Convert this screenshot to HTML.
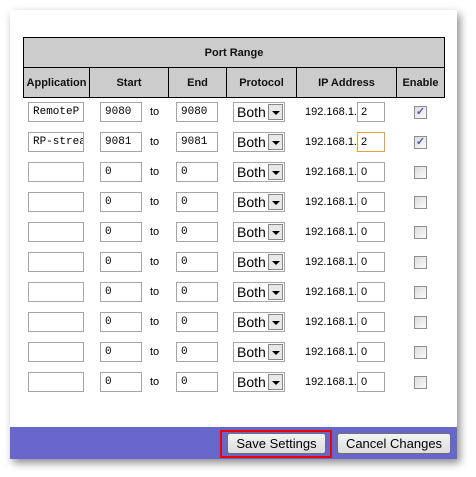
<!DOCTYPE html>
<html><head><style>
body{margin:0;width:476px;height:477px;background:#fff;position:relative;overflow:hidden;font-family:"Liberation Sans",Arial,sans-serif;}
.panel{position:absolute;left:10px;top:10px;width:447px;height:449px;background:#fff;box-shadow:3px 4px 8px rgba(0,0,0,.45);}
.bar{position:absolute;left:10px;top:427px;width:447px;height:32px;background:#6666cc;}
.a{position:absolute;}
.h{position:absolute;background:#ccc;border:1px solid #000;box-sizing:border-box;font-weight:bold;font-size:11px;display:flex;align-items:center;justify-content:center;color:#111;}
.in{position:absolute;height:20px;border:1px solid #a5a5a5;box-sizing:border-box;font-family:"Liberation Mono",monospace;font-size:11px;line-height:18px;padding-left:4px;background:#fff;overflow:hidden;white-space:nowrap;}
.ip{font-family:"Liberation Sans",sans-serif;padding-left:3px;}
.t{position:absolute;font-size:11px;}
.sel{position:absolute;width:52px;height:20px;border:1px solid #a5a5a5;box-sizing:border-box;font-size:14px;line-height:18px;padding-left:3px;}
.sel i{position:absolute;right:1px;top:1px;width:15px;height:16px;background:#e8e8e8;border:1px solid #888;box-sizing:border-box;}
.sel i:after{content:"";position:absolute;left:3px;top:6px;border-left:4px solid transparent;border-right:4px solid transparent;border-top:4px solid #000;}
.cb{position:absolute;left:414px;width:13px;height:13px;border:1px solid #8f8f8f;box-sizing:border-box;background:linear-gradient(135deg,#ddd,#fafafa);font-size:11px;font-weight:bold;line-height:11px;text-align:center;color:#4a5ea8;}
.btn{position:absolute;top:433px;height:21px;border:1px solid #707070;border-radius:3px;background:linear-gradient(#f4f4f4,#dcdcdc);box-sizing:border-box;font-size:13px;text-align:center;line-height:19px;}
</style></head><body>
<div class="panel"></div>
<div class="bar"></div>
<div class="h" style="left:23px;top:37px;width:422px;height:31px">Port Range</div>
<div class="h" style="left:23px;top:67px;width:67px;height:31px">Application</div>
<div class="h" style="left:89px;top:67px;width:80px;height:31px">Start</div>
<div class="h" style="left:168px;top:67px;width:59px;height:31px">End</div>
<div class="h" style="left:226px;top:67px;width:71px;height:31px">Protocol</div>
<div class="h" style="left:296px;top:67px;width:101px;height:31px">IP Address</div>
<div class="h" style="left:396px;top:67px;width:49px;height:31px">Enable</div>
<div id="rows"></div>
<script>
var d=[["RemoteP","9080","9080","2",1],["RP-stre&#8203;a","9081","9081","2",1]];
var h="";
for(var i=0;i<10;i++){var y=102+30*i;var r=d[i]||["","0","0","0",0];
h+='<div class="in" style="left:28px;top:'+y+'px;width:56px">'+r[0]+'</div>';
h+='<div class="in" style="left:100px;top:'+y+'px;width:42px">'+r[1]+'</div>';
h+='<div class="t" style="left:150px;top:'+(y+4)+'px">to</div>';
h+='<div class="in" style="left:176px;top:'+y+'px;width:42px">'+r[2]+'</div>';
h+='<div class="sel" style="left:233px;top:'+y+'px">Both<i></i></div>';
h+='<div class="t" style="left:305px;top:'+(y+4)+'px">192.168.1.</div>';
h+='<div class="in ip" style="left:357px;top:'+y+'px;width:28px;'+(i==1?'border-color:#e8a33a':'')+'">'+r[3]+'</div>';
h+='<div class="cb" style="top:'+(y+4)+'px">'+(r[4]?'&#10003;':'')+'</div>';}
document.getElementById("rows").innerHTML=h;
</script>
<div class="a" style="left:220px;top:430px;width:112px;height:28px;border:2px solid #e00;box-sizing:border-box"></div>
<div class="btn" style="left:227px;width:99px">Save Settings</div>
<div class="btn" style="left:337px;width:114px">Cancel Changes</div>
</body></html>
